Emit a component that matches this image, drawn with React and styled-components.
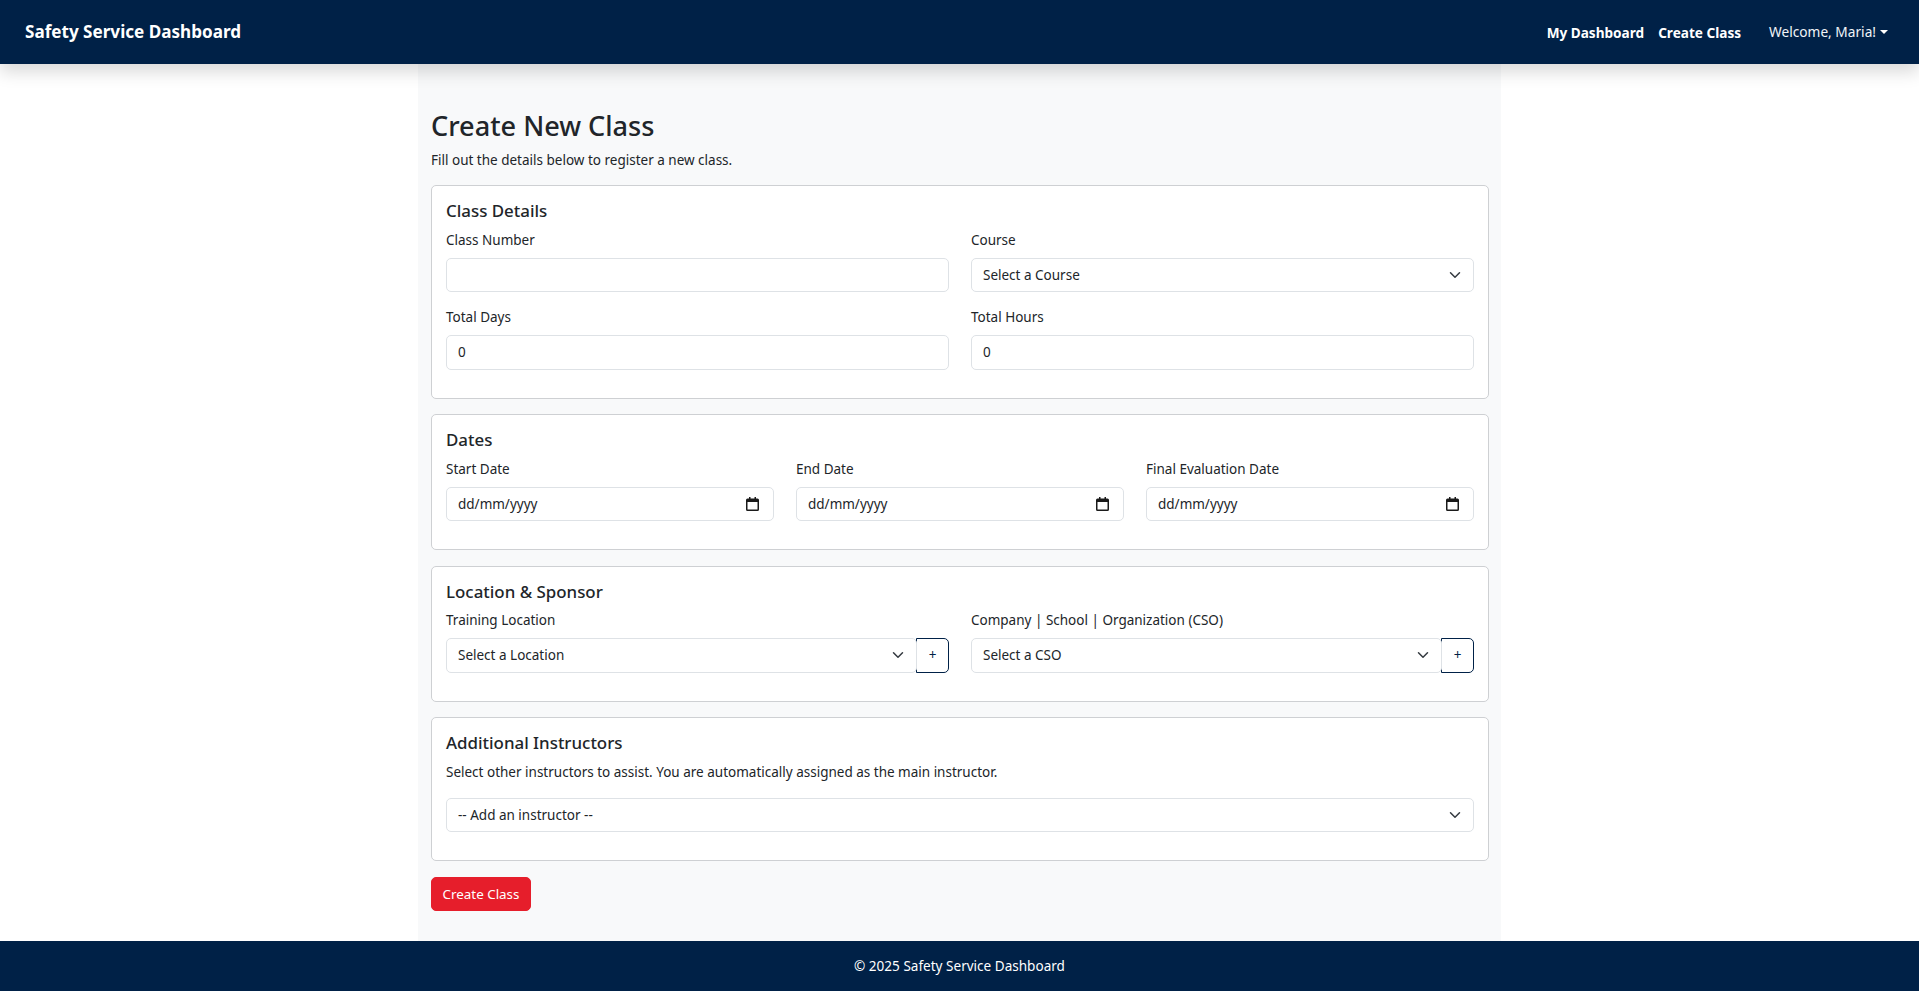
import React from 'react';
import styled, { createGlobalStyle } from 'styled-components';

const GlobalStyle = createGlobalStyle`
  * { box-sizing: border-box; }
  html, body { margin: 0; padding: 0; background: #fff; }
  body {
    font-family: "Noto Sans", "Open Sans", sans-serif;
    font-size: 13.5px;
    color: #212529;
  }
  input::placeholder { color: #212529; opacity: 1; }
`;

const Page = styled.div`
  display: flex;
  flex-direction: column;
  min-height: 991px;
`;

const Navbar = styled.nav`
  position: relative;
  z-index: 2;
  display: flex;
  justify-content: space-between;
  align-items: center;
  height: 64px;
  padding: 0 31px 0 25px;
  background: #002147;
  box-shadow: 0 8px 16px rgba(0, 0, 0, 0.15);
`;

const Brand = styled.a`
  padding-bottom: 2px;
  font-size: 17.1px;
  font-weight: 700;
  color: #fff;
`;

const Menu = styled.div`
  display: flex;
  align-items: center;
`;

const MenuLink = styled.a`
  font-size: 13.6px;
  font-weight: 700;
  color: #fff;
  margin-right: 14px;
`;

const UserMenu = styled.a`
  display: flex;
  align-items: center;
  margin-left: 14px;
  padding-bottom: 1px;
  font-size: 13.7px;
  color: #f1f4f8;
`;

const Caret = styled.span`
  margin-left: 4px;
  border-top: 4px solid #fff;
  border-left: 4px solid transparent;
  border-right: 4px solid transparent;
`;

const Main = styled.main`
  flex: 1;
  align-self: center;
  width: 1083px;
  padding: 45px 12px 30px 13px;
  background: #f8f9fa;
`;

const Heading = styled.h1`
  margin: 0 0 7px;
  font-size: 27.1px;
  font-weight: 500;
  line-height: 34px;
`;

const Intro = styled.p`
  margin: 0 0 15px;
  line-height: 20px;
`;

const Card = styled.section`
  padding: 14px 14px 13px;
  margin-bottom: 15.6px;
  background: #fff;
  border: 1px solid #ced0d3;
  border-radius: 5px;
`;

const CardTitle = styled.h2`
  margin: 0 0 8.5px;
  font-size: 16.9px;
  font-weight: 500;
  line-height: 21px;
`;

const Grid = styled.div`
  display: grid;
  grid-template-columns: repeat(${(p) => p.$cols}, minmax(0, 1fr));
  column-gap: 22px;
`;

const Field = styled.div`
  margin-bottom: 15px;
`;

const Label = styled.label`
  display: block;
  margin-bottom: 8px;
  line-height: 20px;
`;

const Help = styled.p`
  margin: 0 0 16px;
  line-height: 20px;
`;

const Input = styled.input`
  display: block;
  width: 100%;
  height: 34.5px;
  padding: 0 11px;
  font-family: inherit;
  font-size: 13.5px;
  color: #212529;
  background: #fff;
  border: 1px solid #dee2e6;
  border-radius: 5px;
  outline: none;
`;

const Overlaid = styled.div`
  position: relative;
  flex: 1;
  min-width: 0;
`;

const Select = styled.select`
  display: block;
  width: 100%;
  height: 34.5px;
  padding: 0 32px 0 11px;
  font-family: inherit;
  font-size: 13.5px;
  color: #212529;
  background: #fff;
  border: 1px solid #dee2e6;
  border-radius: 5px;
  appearance: none;
  outline: none;
`;

const Chevron = styled.svg`
  position: absolute;
  top: 11px;
  right: 13px;
  width: 12px;
  height: 12px;
  pointer-events: none;
`;

const CalendarIcon = styled.svg`
  position: absolute;
  top: 10px;
  right: 15px;
  width: 13px;
  height: 14px;
  pointer-events: none;
`;

const InputGroup = styled.div`
  display: flex;
`;

const AddButton = styled.button`
  width: 33px;
  height: 34.5px;
  margin-left: -1px;
  padding: 0;
  font-family: inherit;
  font-size: 13.5px;
  color: #002147;
  background: #fff;
  border: 1px solid #002147;
  border-radius: 0 5px 5px 0;
`;

const SubmitButton = styled.button`
  display: block;
  height: 34px;
  width: 100px;
  padding: 0;
  font-family: inherit;
  font-size: 13.4px;
  color: #fff;
  background: #e61e2b;
  border: 1px solid #e61e2b;
  border-radius: 5px;
`;

const Footer = styled.footer`
  height: 51px;
  display: flex;
  align-items: center;
  justify-content: center;
  font-size: 13.55px;
  color: #fff;
  background: #002147;
`;

const DropDown = ({ children }) => (
  <Overlaid>
    <Select defaultValue={children}>
      <option>{children}</option>
    </Select>
    <Chevron viewBox="0 0 16 16" fill="none" stroke="#343a40" strokeWidth="2" strokeLinecap="round" strokeLinejoin="round">
      <path d="m2 5 6 6 6-6" />
    </Chevron>
  </Overlaid>
);

const DateField = ({ label }) => (
  <Field>
    <Label>{label}</Label>
    <Overlaid>
      <Input type="text" placeholder="dd/mm/yyyy" />
      <CalendarIcon viewBox="0 0 13 14">
        <path fill="#1a1a1a" d="M3 0h1.5v1.5h4V0H10v1.5h1.5A1.5 1.5 0 0 1 13 3v9.5a1.5 1.5 0 0 1-1.5 1.5h-10A1.5 1.5 0 0 1 0 12.5V3a1.5 1.5 0 0 1 1.5-1.5H3V0Zm-1.5 5v7.5h10V5h-10Z" />
      </CalendarIcon>
    </Overlaid>
  </Field>
);

export default function App() {
  return (
    <Page>
      <GlobalStyle />
      <Navbar>
        <Brand>Safety Service Dashboard</Brand>
        <Menu>
          <MenuLink>My Dashboard</MenuLink>
          <MenuLink>Create Class</MenuLink>
          <UserMenu>Welcome, Maria!<Caret /></UserMenu>
        </Menu>
      </Navbar>
      <Main>
        <Heading>Create New Class</Heading>
        <Intro>Fill out the details below to register a new class.</Intro>

        <Card>
          <CardTitle>Class Details</CardTitle>
          <Grid $cols={2}>
            <Field>
              <Label>Class Number</Label>
              <Input type="text" />
            </Field>
            <Field>
              <Label>Course</Label>
              <DropDown>Select a Course</DropDown>
            </Field>
            <Field>
              <Label>Total Days</Label>
              <Input type="number" defaultValue="0" />
            </Field>
            <Field>
              <Label>Total Hours</Label>
              <Input type="number" defaultValue="0" />
            </Field>
          </Grid>
        </Card>

        <Card>
          <CardTitle>Dates</CardTitle>
          <Grid $cols={3}>
            <DateField label="Start Date" />
            <DateField label="End Date" />
            <DateField label="Final Evaluation Date" />
          </Grid>
        </Card>

        <Card>
          <CardTitle>Location &amp; Sponsor</CardTitle>
          <Grid $cols={2}>
            <Field>
              <Label>Training Location</Label>
              <InputGroup>
                <DropDown>Select a Location</DropDown>
                <AddButton>+</AddButton>
              </InputGroup>
            </Field>
            <Field>
              <Label>Company | School | Organization (CSO)</Label>
              <InputGroup>
                <DropDown>Select a CSO</DropDown>
                <AddButton>+</AddButton>
              </InputGroup>
            </Field>
          </Grid>
        </Card>

        <Card>
          <CardTitle>Additional Instructors</CardTitle>
          <Help>Select other instructors to assist. You are automatically assigned as the main instructor.</Help>
          <Field>
            <DropDown>-- Add an instructor --</DropDown>
          </Field>
        </Card>

        <SubmitButton>Create Class</SubmitButton>
      </Main>
      <Footer>© 2025 Safety Service Dashboard</Footer>
    </Page>
  );
}
